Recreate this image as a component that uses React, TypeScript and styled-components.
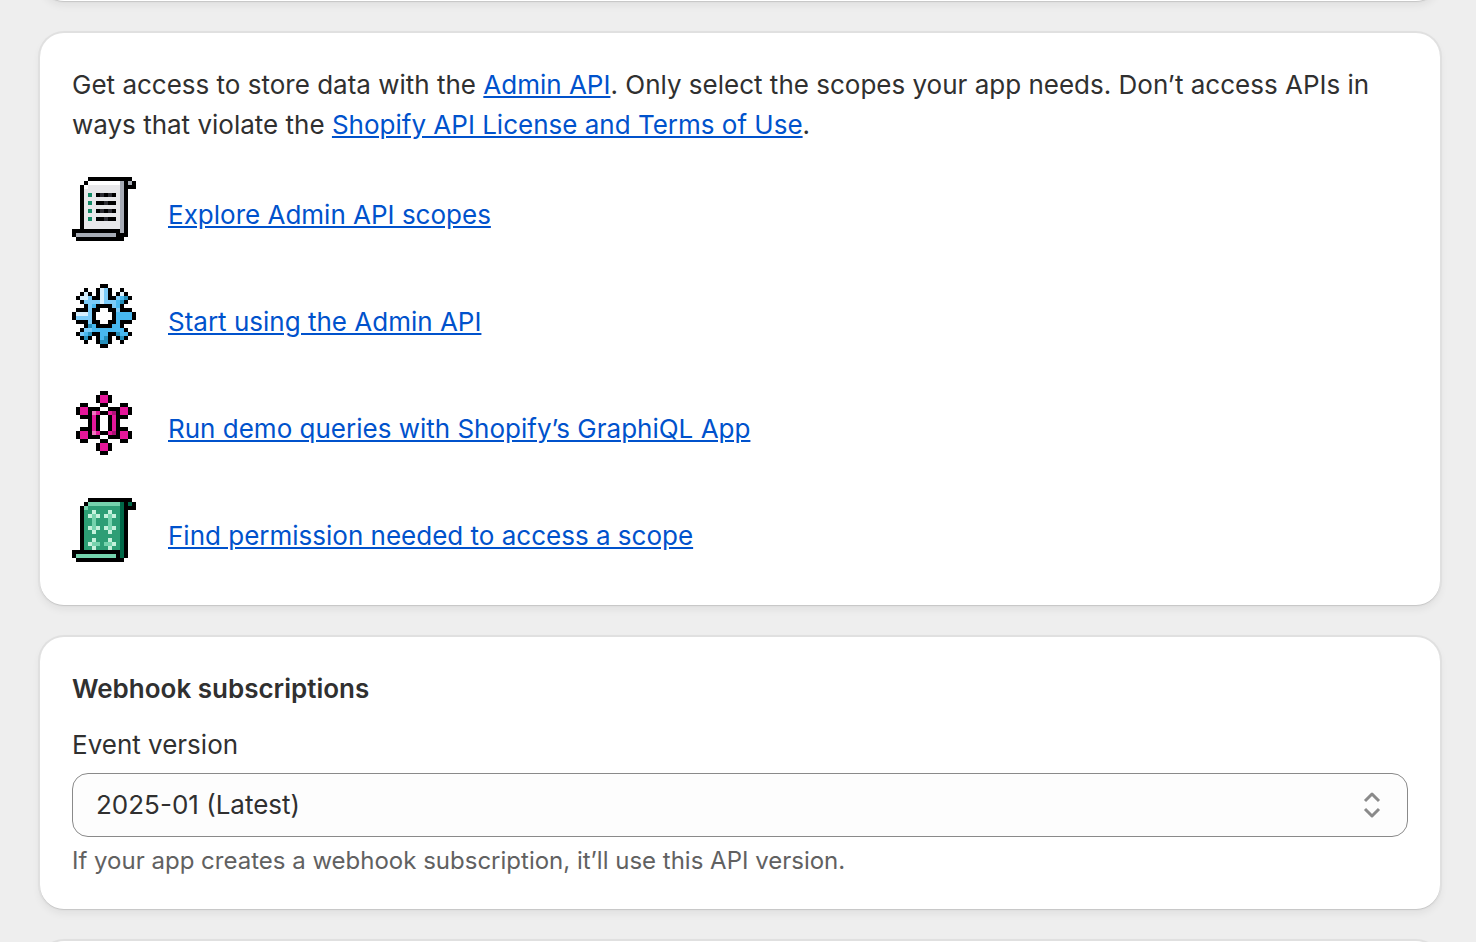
import React from 'react';
import styled, { createGlobalStyle } from 'styled-components';

const GlobalStyle = createGlobalStyle`
  *, *::before, *::after { box-sizing: border-box; }
  body {
    margin: 0;
    background: #eeeeee;
    color: #303030;
    font-family: Inter, "Liberation Sans", sans-serif;
    font-size: 26px;
    font-weight: 400;
    line-height: 40px;
    -webkit-font-smoothing: antialiased;
  }
`;

const Page = styled.main`
  display: flex;
  flex-direction: column;
  gap: 32px;
  height: 100vh;
  overflow: hidden;
  padding: 0 36px 0 40px;
`;

const Card = styled.section`
  display: flex;
  flex-direction: column;
  flex: none;
  padding: 32px;
  border-radius: 24px;
  background: #ffffff;
  box-shadow:
    0 1px 0 0 #c8c8c8,
    0 0 0 2px #e0e0e0,
    0 4px 8px rgba(26, 26, 26, 0.07);
`;

const PreviousCard = styled(Card)`
  margin-top: -63px;
`;

const Intro = styled.p`
  margin: 0 0 32px;
`;

const Link = styled.a`
  color: #0052cc;
  text-decoration: underline;
`;

const ResourceList = styled.ul`
  display: flex;
  flex-direction: column;
  gap: 32px;
  margin: 0;
  padding: 0;
  list-style: none;
`;

const Resource = styled.li`
  display: flex;
  align-items: center;
  gap: 32px;
  height: 75px;
`;

const PixelSvg = styled.svg`
  flex: none;
  align-self: flex-start;
  width: 64px;
  height: 64px;
`;

const Heading = styled.h2`
  margin: 0 0 16px;
  font-size: 26px;
  font-weight: 600;
  line-height: 40px;
`;

const Field = styled.div`
  display: flex;
  flex-direction: column;
  gap: 8px;
`;

const SelectBox = styled.div`
  display: grid;
  align-items: center;
  > * { grid-area: 1 / 1; }
`;

const Select = styled.select`
  appearance: none;
  width: 100%;
  height: 64px;
  padding: 0 64px 0 23px;
  border: 1px solid #8a8a8a;
  border-radius: 16px;
  background: #fdfdfd;
  color: #303030;
  font: inherit;
`;

const SelectIcon = styled.svg`
  justify-self: end;
  width: 40px;
  height: 40px;
  margin-right: 16px;
  pointer-events: none;
`;

const HelpText = styled.p`
  margin: 0;
  color: #616161;
  font-size: 24px;
  line-height: 32px;
`;

type Art = { rows: string[]; colors: Record<string, string> };

const scroll: Art = {
  colors: { k: '#000000', w: '#ffffff', b: '#e8e8ea', s: '#a6abb5', g: '#138a66', d: '#2c2c32' },
  rows: [
    '....kkkkkkkkkkk.',
    '...kwwwwwwwwsksk',
    '..kwbbbbbbbbskkk',
    '..kbbbbbbbbbsk..',
    '..kbgbkdkdkbsk..',
    '..kbbbbbbbbbsk..',
    '..kbgbkkdkkbsk..',
    '..kbbbbbbbbbsk..',
    '..kbgbkdkdkbsk..',
    '..kbbbbbbbbbsk..',
    '..kbgbkkdkkbsk..',
    '..kbbbbbbbbbsk..',
    '..kbbbbbbbbbsk..',
    'kkkkkkkkkkkksk..',
    'ksssssssssskkk..',
    '.kkkkkkkkkkkk...',
  ],
};

const gear: Art = {
  colors: { k: '#000000', l: '#d6effd', b: '#7bcbf8', m: '#48b8ef', d: '#258fbb' },
  rows: [
    '.......kk.......',
    '...k..klbk..k...',
    '..klk.klbk.klk..',
    '.kllbkklbkkbmdk.',
    '..kbbbblbbbmdk..',
    '...kbmkkkkbmk...',
    '.kkkbkk..kkbkkk.',
    'klllbk....kmmmmk',
    'kbbbbk....kmmmmk',
    '.kkkbkk..kkmkkk.',
    '...kdmkkkkmmk...',
    '..kbbmmmmmmmmk..',
    '.kbmdkkmmkkdmmk.',
    '..kdk.kmdk.kdk..',
    '...k..kddk..k...',
    '.......kk.......',
  ],
};

const graph: Art = {
  colors: { k: '#000000', p: '#e5179a', l: '#f076c0', d: '#ad1277' },
  rows: [
    '.......kk.......',
    '......kppk......',
    '......kppk......',
    '..kk...kk...kk..',
    '.kppkkk..kkkppk.',
    '.kppklpkkpdkppk.',
    '..kkkpk..kpkkk..',
    '....kpk..kpk....',
    '....kpk..kpk....',
    '..kkkpk..kpkkk..',
    '.kppklpkkpdkppk.',
    '.kppkkk..kkkppk.',
    '..kk...kk...kk..',
    '......kppk......',
    '......kppk......',
    '.......kk.......',
  ],
};

const greenScroll: Art = {
  colors: { k: '#000000', m: '#75d3ad', b: '#2d9e75', d: '#006848', l: '#c5f1dc' },
  rows: [
    '....kkkkkkkkkkk.',
    '...kmmmmmmmmdkdk',
    '..kmbbbbbbbbdkkk',
    '..kbblbbblbbdk..',
    '..kblmlblmlbdk..',
    '..kbbmbbbmbbdk..',
    '..kbbmbbbmbbdk..',
    '..kblmlblmlbdk..',
    '..kbblbbblbbdk..',
    '..kbbbbbbbbbdk..',
    '..kbblbbblbbdk..',
    '..kblmmbmmlbdk..',
    '..kbblbbblbbdk..',
    'kkkkkkkkkkkkdk..',
    'kmmmmmmmmmmkdk..',
    '.kkkkkkkkkkkk...',
  ],
};

function PixelIcon({ art }: { art: Art }) {
  return (
    <PixelSvg viewBox="0 0 16 16" shapeRendering="crispEdges" aria-hidden="true">
      {art.rows.flatMap((row, y) =>
        [...row].map((c, x) =>
          c === '.' ? null : (
            <rect key={`${x}-${y}`} x={x} y={y} width="1" height="1" fill={art.colors[c]} />
          ),
        ),
      )}
    </PixelSvg>
  );
}

const resources = [
  { art: scroll, label: 'Explore Admin API scopes' },
  { art: gear, label: 'Start using the Admin API' },
  { art: graph, label: 'Run demo queries with Shopify’s GraphiQL App' },
  { art: greenScroll, label: 'Find permission needed to access a scope' },
];

export default function App() {
  return (
    <>
      <GlobalStyle />
      <Page>
        <PreviousCard />
        <Card>
          <Intro>
            Get access to store data with the <Link href="#admin-api">Admin API</Link>. Only select
            the scopes your app needs. Don’t access APIs in ways that violate the{' '}
            <Link href="#terms">Shopify API License and Terms of Use</Link>.
          </Intro>
          <ResourceList>
            {resources.map(({ art, label }) => (
              <Resource key={label}>
                <PixelIcon art={art} />
                <Link href="#resource">{label}</Link>
              </Resource>
            ))}
          </ResourceList>
        </Card>
        <Card>
          <Heading>Webhook subscriptions</Heading>
          <Field>
            <label htmlFor="event-version">Event version</label>
            <SelectBox>
              <Select id="event-version" aria-describedby="event-version-help">
                <option>2025-01 (Latest)</option>
              </Select>
              <SelectIcon viewBox="0 0 40 40" fill="none" aria-hidden="true">
                <path
                  d="M13 16L20 9L27 16M13 24L20 31L27 24"
                  stroke="#8a8a8a"
                  strokeWidth="3"
                  strokeLinejoin="round"
                />
              </SelectIcon>
            </SelectBox>
            <HelpText id="event-version-help">
              If your app creates a webhook subscription, it’ll use this API version.
            </HelpText>
          </Field>
        </Card>
        <Card />
      </Page>
    </>
  );
}
